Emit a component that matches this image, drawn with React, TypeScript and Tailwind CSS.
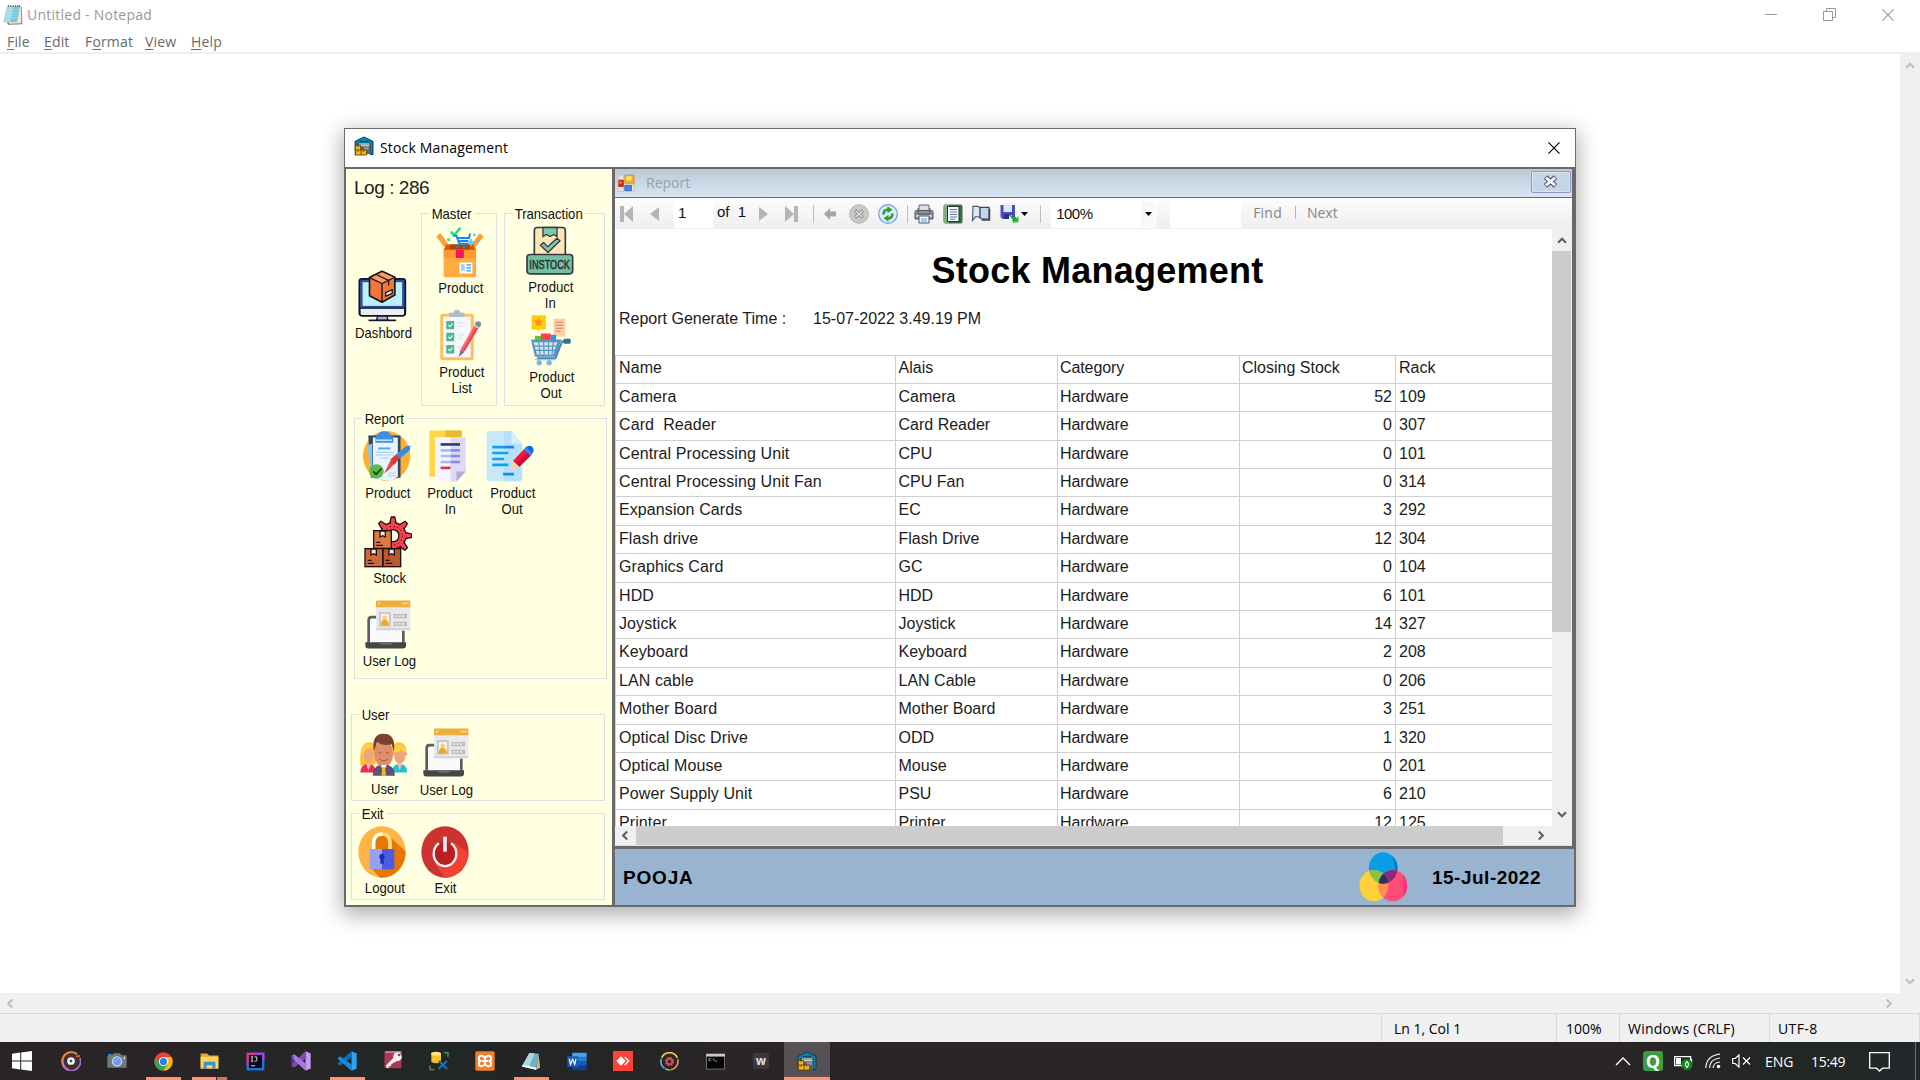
import { ReactNode } from "react";

type IconProps = { className?: string };

/* ---------- window and application icons ---------- */

const Warehouse = ({ className }: IconProps) => (
  <svg viewBox="0 0 58 60" className={className}>
    <path d="M2 16 L29 3 L56 16 V56 H48 V22 H10 V56 H3 Z" fill="#0f87ab" stroke="#0b3b4d" strokeWidth="3" />
    <path d="M16 16 h26" stroke="#0b3b4d" strokeWidth="3" />
    <rect x="11" y="22" width="37" height="32" fill="#5c6672" />
    <path d="M14 24 h31 M14 29 h31" stroke="#e1e5ea" strokeWidth="3" />
    <rect x="29" y="33" width="14" height="10" fill="#8a929b" />
    <path d="M3 28 h16 v14 h18 v15 h-34 z" fill="#f5b51b" stroke="#5a3c05" strokeWidth="2.5" />
    <path d="M3 42 h17 v15 M11 28 v6 M11 42 v6 M28 42 v6" stroke="#5a3c05" strokeWidth="2.5" fill="none" />
  </svg>
);

const NotepadSmall = ({ className }: IconProps) => (
  <svg viewBox="8 12 60 60" className={className}>
    <path d="M64 16 L66 70 L24 71 L20 66 Z" fill="#8d7755" />
    <path d="M22 17 L62 15 L63 67 L26 68 Z" fill="#f1ead8" />
    <path d="M20 17 L60 15 L50 64 L9 64 Z" fill="#7cc3d6" />
    <path d="M20 17 L40 16 L30 64 L9 64 Z" fill="#a5dbe6" />
    <path d="M20 26h36M18 34h36M16 42h36M14 50h36" stroke="#b8e3ec" strokeWidth="2" />
    <path d="M24 12v6M31 12v6M38 12v6M45 12v6M52 12v6M58 12v6" stroke="#57616a" strokeWidth="3" />
  </svg>
);

const WinForms = ({ className }: IconProps) => (
  <svg viewBox="22 40 53 53" className={className}>
    <rect x="25" y="43" width="48" height="48" fill="#e6e3df" stroke="#b9bcc4" strokeWidth="2" />
    <path d="M41 43v48M25 75h48" stroke="#b9bcc4" strokeWidth="2" />
    <rect x="26" y="57" width="16" height="21" fill="#c22c12" />
    <rect x="29" y="62" width="7" height="7" fill="#f0795c" />
    <rect x="45" y="43" width="27" height="26" rx="2" fill="#f2b21b" stroke="#c68a10" strokeWidth="2" />
    <rect x="49" y="47" width="16" height="12" fill="#fbe08a" />
    <rect x="45" y="74" width="20" height="15" fill="#4484e8" stroke="#2a5cbc" strokeWidth="2" />
  </svg>
);

const CloseX = ({ className }: IconProps) => (
  <svg viewBox="0 0 12 12" className={className}>
    <path d="M.4.4 11.6 11.6M11.6.4.4 11.6" stroke="currentColor" strokeWidth="1.1" fill="none" />
  </svg>
);

const Chevron = ({ className }: IconProps) => (
  <svg viewBox="0 0 10 7" className={className}>
    <path d="M1 5.7 5 1.7 9 5.7" stroke="currentColor" strokeWidth="2.2" fill="none" />
  </svg>
);

/* ---------- sidebar icons ---------- */

const DashboardIcon = () => (
  <svg viewBox="51 451 147 158" className="relative right-0.5 h-[52px] w-[49px]">
    <rect x="54" y="478" width="140" height="112" rx="8" fill="#33509a" stroke="#0d1526" strokeWidth="5" />
    <rect x="64" y="488" width="120" height="72" fill="#b9f0fb" />
    <path d="M56 567h136v16q0 7-7 7H63q-7 0-7-7z" fill="#e9eef3" stroke="#0d1526" strokeWidth="4" />
    <path d="M110 591h28l4 13h-36z" fill="#aab7c4" stroke="#0d1526" strokeWidth="4" />
    <path d="M82 604h84" stroke="#0d1526" strokeWidth="5" />
    <path d="M123 455 162 473V527L123 549 85 529V474Z" fill="#f0763c" stroke="#16131a" strokeWidth="5" strokeLinejoin="round" />
    <path d="M123 455 162 473 123 492 85 474Z" fill="#ff9b5e" stroke="#16131a" strokeWidth="4" strokeLinejoin="round" />
    <path d="M123 492V549M104 464 143 483V498" stroke="#16131a" strokeWidth="4" fill="none" />
    <path d="M134 520 154 511V522L134 531Z" fill="#e8eef6" stroke="#16131a" strokeWidth="4" />
  </svg>
);

const ProductBoxIcon = () => (
  <svg viewBox="288 316 145 156" className="h-[52px] w-[48px]">
    <path d="M312 378 289 347 301 337 327 372Z" fill="#ffa033" />
    <path d="M408 378 432 347 420 337 394 372Z" fill="#ffa033" />
    <path d="M318 371h84l7 18H311z" fill="#e05a00" />
    <path d="M330 371h60v14h-60z" fill="#b84100" />
    <path d="M311 388h98v76q0 6-6 6H317q-6 0-6-6z" fill="#ffab40" />
    <path d="M311 388h98v24h-98z" fill="#ff9a2e" />
    <rect x="348" y="388" width="24" height="24" fill="#f5145f" />
    <rect x="359" y="426" width="39" height="33" fill="#fff" />
    <path d="M363 431h12v20h-12z" fill="#9ad5ff" />
    <path d="M380 433h14M380 442h14M380 451h14" stroke="#1ea0ff" strokeWidth="4" />
    <path d="M333 333 343 343 362 321" stroke="#22e07c" strokeWidth="8" fill="none" />
    <path d="M340 345h10l8 24h28M350 352h38l3-14M354 361h32" stroke="#1687f5" strokeWidth="6" fill="none" />
    <circle cx="352" cy="379" r="4" fill="#1687f5" />
    <circle cx="373" cy="379" r="4" fill="#1687f5" />
    <circle cx="326" cy="357" r="5" fill="#43e8a0" />
    <path d="M394 355v20M384 365h20" stroke="#5ecbff" strokeWidth="7" />
    <circle cx="404" cy="342" r="4" fill="#42c4ff" />
    <circle cx="416" cy="359" r="3" fill="#42c4ff" />
  </svg>
);

const ProductListIcon = () => (
  <svg viewBox="300 567 128 157" className="h-[52px] w-[43px]">
    <rect x="303" y="581" width="101" height="141" rx="7" fill="#fdbf57" />
    <rect x="312" y="590" width="83" height="123" fill="#f6f7fb" />
    <path d="M330 578h12q2-9 11-9t11 9h12v13h-46z" fill="#b0bccb" />
    <g fill="#4fb494">
      <rect x="321" y="603" width="24" height="25" rx="2" />
      <rect x="321" y="639" width="24" height="25" rx="2" />
      <rect x="321" y="676" width="24" height="25" rx="2" />
    </g>
    <path d="M327 615l5 5 8-9M327 651l5 5 8-9M327 688l5 5 8-9" stroke="#e9fff7" strokeWidth="3.5" fill="none" />
    <path d="M355 609h20M355 618h12M355 645h20M355 654h12M355 682h10" stroke="#d5dff2" strokeWidth="3" />
    <path d="M408 612 420 621 377 694 361 706 365 687Z" fill="#ff6670" />
    <path d="M414 616 420 621 377 694 371 691Z" fill="#e04a5a" />
    <path d="M365 690 376 697 358 712Z" fill="#68788a" />
    <circle cx="417" cy="613" r="9" fill="#7d8ca0" />
    <path d="M405 615 417 624" stroke="#cdd8e4" strokeWidth="5" />
  </svg>
);

const InStockIcon = () => (
  <svg viewBox="558 317 144 146" className="h-[49px] w-[48px]">
    <rect x="583" y="321" width="93" height="88" rx="9" fill="#ffe6b8" stroke="#363a3c" strokeWidth="5" />
    <path d="M609 321h42v27l-10-6-11 6-11-6-10 6z" fill="#7fc8ac" stroke="#363a3c" strokeWidth="4" />
    <path d="M601 374l10-8 12 13 28-26 9 8-36 35z" fill="#7fc8ac" stroke="#363a3c" strokeWidth="4" strokeLinejoin="round" />
    <rect x="561" y="402" width="137" height="58" rx="9" fill="#74bfa4" stroke="#363a3c" strokeWidth="5" />
    <text x="629" y="445" textAnchor="middle" textLength="122" lengthAdjust="spacingAndGlyphs" fontFamily="Liberation Sans" fontSize="39" fill="#26302f" stroke="#26302f" strokeWidth="1.500">INSTOCK</text>
  </svg>
);

const CartIcon = () => (
  <svg viewBox="571 582 124 157" className="h-[52px] w-[41px]">
    <path d="M576 586h43v43h-18l-5 6-5-6h-15z" fill="#ffcf0f" />
    <path d="M597 591l4.500 9.500 10 1-7.500 7 2 10.500-9-5-9 5 2-10.500-7.500-7 10-1z" fill="#f79310" />
    <rect x="642" y="596" width="36" height="54" fill="#ffcfa6" />
    <path d="M648 607h23M648 616h23M648 625h23M648 634h16" stroke="#c98863" strokeWidth="3" />
    <rect x="586" y="648" width="20" height="14" fill="#5ec82c" />
    <rect x="604" y="641" width="30" height="20" fill="#ff3d4d" />
    <rect x="634" y="645" width="16" height="16" fill="#2497e8" />
    <path d="M574 659h92l-17 52h-63z" fill="#5a95bd" />
    <path d="M582 667h72l-13 38h-49z" fill="#cfe4f5" />
    <path d="M597 664l5 44M612 664l2 44M627 664v44M642 664l-5 44M580 679h74M584 692h66" stroke="#5a95bd" strokeWidth="3.500" />
    <path d="M592 716h56l20-51h24" stroke="#4987b0" strokeWidth="6" fill="none" />
    <rect x="672" y="657" width="22" height="15" rx="4" fill="#356f96" />
    <circle cx="599" cy="729" r="8" fill="#7fb5da" />
    <circle cx="629" cy="729" r="8" fill="#7fb5da" />
    <path d="M586 720h60" stroke="#9cc8e6" strokeWidth="4" />
  </svg>
);

const ReportProductIcon = () => (
  <svg viewBox="66 76 146 156" className="h-[52px] w-[48px]">
    <ellipse cx="138" cy="154" rx="72" ry="76" fill="#ffb02e" />
    <path d="M82 92h98v128H90z" fill="#2b4a66" />
    <path d="M96 98h76v118l-20 14-56-6z" fill="#e8f3ff" />
    <path d="M80 122l14-6v90l-6 6z" fill="#7ec5f8" />
    <path d="M108 94q4-15 22-15t22 15h6v20h-54V94z" fill="#3c8fe0" />
    <path d="M106 106h48" stroke="#bfe0fb" strokeWidth="5" />
    <path d="M112 131h37" stroke="#5ba7ee" strokeWidth="6" />
    <path d="M105 143h55M105 151h55M118 160h26M144 206h20M142 214h24" stroke="#a9cdf2" strokeWidth="3" />
    <path d="M130 207 152 163 165 173 145 196Z" fill="#e8483f" />
    <path d="M150 164 168 148 178 160 160 182Z" fill="#d93a34" />
    <path d="M168 148 196 124 210 122 209 136 178 162Z" fill="#3d8be0" />
    <circle cx="107" cy="201" r="22" fill="#5cb947" />
    <path d="M97 201l9 9 16-18" stroke="#173c1b" strokeWidth="5" fill="none" />
  </svg>
);

const ReportInIcon = () => (
  <svg viewBox="266 76 112 156" className="relative right-0.5 h-[52px] w-[37px]">
    <path d="M267 77h98v22h-80v118h-18z" fill="#ffd84a" />
    <path d="M316 77h49v20h-49z" fill="#eab92c" />
    <path d="M285 97h92v104l-28 30h-64z" fill="#f8f5ff" />
    <path d="M331 97h46v104l-28 30h-18z" fill="#dfd9f3" />
    <path d="M349 231v-30h28z" fill="#b5acd6" />
    <path d="M301 119h59" stroke="#23407c" strokeWidth="8" />
    <path d="M301 137h30M301 154h30M301 172h30" stroke="#a3bdff" strokeWidth="8" />
    <path d="M331 137h29M331 154h29M331 172h29" stroke="#7e8cf8" strokeWidth="8" />
    <path d="M301 190h30" stroke="#d23a42" strokeWidth="8" />
  </svg>
);

const ReportOutIcon = () => (
  <svg viewBox="437 76 146 156" className="relative right-px h-[52px] w-[48px]">
    <path d="M450 78h64l33 38v104q0 11-11 11h-86q-11 0-11-11V89q0-11 11-11z" fill="#c9e8fa" />
    <path d="M491 78h23l33 38v104q0 11-11 11h-45z" fill="#b8e0f6" />
    <path d="M514 78l33 38h-27q-6 0-6-6z" fill="#d9f0fc" />
    <path d="M456 127h36M456 145h49M456 163h36M456 181h49" stroke="#0ba6ea" strokeWidth="8" />
    <path d="M492 127h30M489 209h33" stroke="#1888f7" strokeWidth="8" />
    <path d="M553 133 573 153 538 187 519 169Z" fill="#fb1236" />
    <path d="M563 143 573 153 538 187 529 178Z" fill="#cf0c40" />
    <path d="M519 169 538 187 515 194Z" fill="#ffd59a" />
    <circle cx="569" cy="136" r="13" fill="#1466dc" />
    <path d="M553 133 573 153 579 148 558 126Z" fill="#2b8dfb" />
  </svg>
);

const StockIcon = () => {
  const teeth = [0, 45, 90, 135, 180, 225, 270, 315];
  return (
    <svg viewBox="70 332 144 156" className="h-[52px] w-[48px]">
      <g fill="#f9414d" stroke="#1d1015" strokeWidth="4">
        {teeth.map((a) => (
          <path key={a} d="M147 356 152 335h10l5 21z" transform={`rotate(${a} 157 391)`} />
        ))}
        <circle cx="157" cy="391" r="39" />
      </g>
      <circle cx="157" cy="391" r="36" fill="#f9414d" />
      {teeth.map((a) => (
        <path key={a} d="M150 358 154 338h6l4 20z" fill="#f9414d" transform={`rotate(${a} 157 391)`} />
      ))}
      <circle cx="157" cy="391" r="28" fill="none" stroke="#5b1520" strokeWidth="3" strokeDasharray="5 7" />
      <circle cx="157" cy="391" r="18" fill="#ffffe1" stroke="#1d1015" strokeWidth="4" />
      <g stroke="#1d1015" strokeWidth="4">
        <rect x="99" y="376" width="53" height="53" fill="#dd7a41" />
        <rect x="73" y="430" width="53" height="54" fill="#cf6a38" />
        <rect x="127" y="430" width="53" height="54" fill="#b85a2e" />
        <g fill="#ffe9d6">
          <path d="M118 377h16v18l-8-4-8 4z" />
          <path d="M91 431h16v18l-8-4-8 4z" />
          <path d="M145 431h16v18l-8-4-8 4z" />
        </g>
        <path d="M107 411h12M107 420h20M81 465h12M81 474h20M135 465h12M135 474h20" strokeWidth="4" />
      </g>
    </svg>
  );
};

const UserLogIcon = () => (
  <svg viewBox="74 584 138 146" className="h-[49px] w-[46px]">
    <path d="M85 712v-68q0-9 9-9h86q9 0 9 9v68" fill="#fafafa" stroke="#5d5d60" strokeWidth="8" />
    <path d="M75 710h122v10q0 9-9 9H84q-9 0-9-9z" fill="#454547" />
    <path d="M116 710h42l-6 8h-30z" fill="#6b6b6e" />
    <rect x="107" y="586" width="103" height="90" rx="4" fill="#e9e9ea" />
    <path d="M107 672h103v-3H107z" fill="#c4c4c6" />
    <path d="M107 605v-16q0-4 4-4h95q4 0 4 4v16z" fill="#efae3c" />
    <path d="M113 594h5M187 594h4M194 594h4M201 594h4" stroke="#fff0c4" strokeWidth="4" />
    <rect x="116" y="620" width="35" height="43" fill="#c3c4c8" />
    <rect x="121" y="625" width="25" height="33" fill="#f4f4f4" />
    <circle cx="133" cy="637" r="7" fill="#f9cf69" />
    <path d="M121 660q0-17 12-17t13 17z" fill="#eba92d" />
    <path d="M160 632h40M160 655h40" stroke="#bcbcc0" strokeWidth="13" />
    <path d="M165 632h30M165 655h30" stroke="#f0f0f0" strokeWidth="5" strokeDasharray="6 4" />
  </svg>
);

const UsersIcon = () => (
  <svg viewBox="59 120 146 134" className="h-[45px] w-[48px]">
    <path d="M61 222q-7-72 26-72 28 0 26 50l-10 18z" fill="#ffc22e" />
    <ellipse cx="85" cy="190" rx="15" ry="23" fill="#eda57c" />
    <path d="M69 182q8-16 30-18v-8H74q-10 10-10 26z" fill="#ffcf45" />
    <path d="M60 242q1-26 24-26t24 26z" fill="#f0265e" />
    <path d="M77 214h16l-8 22z" fill="#f2bfa4" />
    <path d="M157 190q-4-40 22-40 24 2 21 38z" fill="#ffc22e" />
    <ellipse cx="180" cy="192" rx="17" ry="23" fill="#eda57c" />
    <path d="M161 180q18 4 22-10 8 10 16 12-2-24-20-24-16 2-18 22z" fill="#ffcf45" />
    <circle cx="199" cy="186" r="4" fill="#eda57c" />
    <path d="M156 242q1-26 24-26t22 26z" fill="#24bfd4" />
    <path d="M172 214h15l-7 22z" fill="#f2bfa4" />
    <ellipse cx="131" cy="184" rx="29" ry="42" fill="#dd9069" />
    <path d="M101 178q-8-54 30-54 38 0 31 54l-7-22q-26 6-44-6z" fill="#7c4030" />
    <path d="M98 252q0-28 22-33l11 8 12-8q22 5 22 33z" fill="#5c5470" />
    <path d="M122 219h18l-9 24z" fill="#f4f0f6" />
    <path d="M127 226h8l3 26h-14z" fill="#f0b52a" />
    <path d="M117 200q14 12 28 0M116 182h10M137 182h10" stroke="#a55a3e" strokeWidth="3" fill="none" />
  </svg>
);

const LogoutIcon = () => (
  <svg viewBox="56 407 144 156" className="relative right-px h-[52px] w-[48px]">
    <defs>
      <clipPath id="lockDisc">
        <ellipse cx="128" cy="485" rx="71" ry="77" />
      </clipPath>
    </defs>
    <ellipse cx="128" cy="485" rx="71" ry="77" fill="#ffb545" />
    <path d="M150 438 204 488V570H130L94 532Z" fill="#e87700" clipPath="url(#lockDisc)" />
    <path d="M105 478v-22q2-24 23-24v-2q23 2 23 26v22" fill="#e87700" />
    <path d="M103 478v-22q2-24 25-25" stroke="#fff" strokeWidth="11" fill="none" />
    <path d="M128 431q23 1 24 25v22" stroke="#ffdf85" strokeWidth="11" fill="none" />
    <path d="M91 476h37v61H99q-8 0-8-8z" fill="#97a0f2" />
    <path d="M128 476h37v53q0 8-8 8h-29z" fill="#4c5ce0" />
    <path d="M128 490a9 9 0 0 1 5 16v14h-10v-14a9 9 0 0 1 5-16z" fill="#1e2bc0" />
  </svg>
);

const PowerIcon = () => (
  <svg viewBox="243 407 144 156" className="h-[52px] w-[48px]">
    <defs>
      <clipPath id="powerDisc">
        <ellipse cx="315" cy="485" rx="71" ry="77" />
      </clipPath>
    </defs>
    <ellipse cx="315" cy="485" rx="71" ry="77" fill="#cc3330" />
    <path d="M345 458 400 500V570H320L284 518Z" fill="#f34235" clipPath="url(#powerDisc)" />
    <ellipse cx="315" cy="490" rx="33" ry="36" fill="#b71f22" />
    <path d="M297 459a34 37 0 1 0 36 0" stroke="#f3f3f3" strokeWidth="7" fill="none" />
    <path d="M315 439v45" stroke="#ececec" strokeWidth="11" />
  </svg>
);

const ColorCircles = () => (
  <svg viewBox="835 214 146 150" className="h-[50px] w-[49px]">
    <defs>
      <clipPath id="cyanDisc">
        <ellipse cx="907" cy="262" rx="43" ry="47" />
      </clipPath>
      <clipPath id="yellowDisc">
        <ellipse cx="879" cy="315" rx="43" ry="47" />
      </clipPath>
    </defs>
    <ellipse cx="907" cy="262" rx="43" ry="47" fill="#089fe6" />
    <path d="M934 225q16 14 16 37t-9 35q6-35-7-72z" fill="#0675d0" />
    <ellipse cx="879" cy="315" rx="43" ry="47" fill="#ffd23c" />
    <ellipse cx="936" cy="315" rx="43" ry="47" fill="#ff4f79" />
    <path d="M965 281q14 14 14 34t-14 34q6-34 0-68z" fill="#ff2f86" />
    <ellipse cx="936" cy="315" rx="43" ry="47" fill="#ff9055" clipPath="url(#yellowDisc)" />
    <ellipse cx="879" cy="315" rx="43" ry="47" fill="#8ac441" clipPath="url(#cyanDisc)" />
    <ellipse cx="936" cy="315" rx="43" ry="47" fill="#8e2a7c" clipPath="url(#cyanDisc)" />
    <g clipPath="url(#yellowDisc)">
      <ellipse cx="936" cy="315" rx="43" ry="47" fill="#2b3158" clipPath="url(#cyanDisc)" />
    </g>
  </svg>
);

/* ---------- sidebar pieces ---------- */

function Tile({
  icon,
  lines,
  className = "",
  labels = "mt-1",
}: {
  icon: ReactNode;
  lines: string[];
  className?: string;
  labels?: string;
}) {
  return (
    <div className={`flex w-[62px] shrink-0 flex-col items-center ${className}`}>
      {icon}
      <div className={`flex flex-col items-center ${labels}`}>
        {lines.map((l) => (
          <span key={l} className="block scale-x-[.875] whitespace-nowrap text-[15px] leading-4 text-[#111]">
            {l}
          </span>
        ))}
      </div>
    </div>
  );
}

function Group({ title, className, children }: { title: string; className: string; children: ReactNode }) {
  return (
    <div className={`relative shrink-0 border-[1.5px] border-[#dedede] ${className}`}>
      <span className="absolute -top-[9px] left-[7px] origin-left scale-x-[.875] whitespace-nowrap bg-[#ffffe1] px-[3px] text-[15px] leading-[17px] text-[#111]">
        {title}
      </span>
      {children}
    </div>
  );
}

function Sidebar() {
  return (
    <div className="flex w-[266px] shrink-0 flex-col bg-[#ffffe1]">
      <div className="pl-[8px] pt-[8px] text-[19px] leading-[22px] tracking-[-0.45px] text-[#222]">Log : 286</div>
      <div className="mt-[14px] flex">
        <div className="w-[75px] pl-[5px] pt-[57px]">
          <div className="flex w-[66px] justify-center">
            <Tile icon={<DashboardIcon />} lines={["Dashbord"]} labels="mt-[3px]" />
          </div>
        </div>
        <Group title="Master" className="flex h-[193px] w-[76px] flex-col pl-[7px] pt-[12px]">
          <Tile icon={<ProductBoxIcon />} lines={["Product"]} labels="mt-[2px] pl-px" />
          <Tile icon={<ProductListIcon />} lines={["Product", "List"]} className="mt-[13px]" labels="mt-[3px] pl-[3px]" />
        </Group>
        <Group title="Transaction" className="ml-[7px] flex h-[193px] w-[101px] flex-col pl-[14px] pt-[12px]">
          <Tile icon={<InStockIcon />} lines={["Product", "In"]} labels="mt-1 pl-px" />
          <Tile icon={<CartIcon />} lines={["Product", "Out"]} className="mt-[3px]" labels="mt-[3px] pl-[3px]" />
        </Group>
      </div>
      <Group title="Report" className="ml-[8px] mt-[12px] flex h-[261px] w-[253px] flex-col pt-[11px]">
        <div className="flex">
          <Tile icon={<ReportProductIcon />} lines={["Product"]} className="ml-[1px]" labels="mt-[3px] pl-[2px]" />
          <Tile icon={<ReportInIcon />} lines={["Product", "In"]} labels="mt-[3px] pl-[2px]" />
          <Tile icon={<ReportOutIcon />} lines={["Product", "Out"]} labels="mt-[3px] pl-[3px]" />
        </div>
        <Tile icon={<StockIcon />} lines={["Stock"]} className="ml-[2px] mt-[-1px]" labels="mt-[2px] pl-[3px]" />
        <Tile icon={<UserLogIcon />} lines={["User Log"]} className="ml-[2px] mt-[14px]" labels="mt-1 pl-[2px]" />
      </Group>
      <Group title="User" className="ml-[5px] mt-[35px] flex h-[87px] w-[254px] pl-px pt-[16px]">
        <Tile icon={<UsersIcon />} lines={["User"]} className="pt-px" labels="mt-1 pl-px" />
        <Tile icon={<UserLogIcon />} lines={["User Log"]} className="mt-[-3px]" labels="mt-[5px] pl-px" />
      </Group>
      <Group title="Exit" className="ml-[5px] mt-[12px] flex h-[87px] w-[254px] pt-[12px]">
        <Tile icon={<LogoutIcon />} lines={["Logout"]} labels="mt-[2px] pl-[4px]" />
        <Tile icon={<PowerIcon />} lines={["Exit"]} labels="mt-[2px] pl-px" />
      </Group>
    </div>
  );
}

/* ---------- report viewer ---------- */

const rows: [string, string, number, number][] = [
  ["Camera", "Camera", 52, 109],
  ["Card  Reader", "Card Reader", 0, 307],
  ["Central Processing Unit", "CPU", 0, 101],
  ["Central Processing Unit Fan", "CPU Fan", 0, 314],
  ["Expansion Cards", "EC", 3, 292],
  ["Flash drive", "Flash Drive", 12, 304],
  ["Graphics Card", "GC", 0, 104],
  ["HDD", "HDD", 6, 101],
  ["Joystick", "Joystick", 14, 327],
  ["Keyboard", "Keyboard", 2, 208],
  ["LAN cable", "LAN Cable", 0, 206],
  ["Mother Board", "Mother Board", 3, 251],
  ["Optical Disc Drive", "ODD", 1, 320],
  ["Optical Mouse", "Mouse", 0, 201],
  ["Power Supply Unit", "PSU", 6, 210],
  ["Printer", "Printer", 12, 125],
];

const cellPad = [
  "pl-[3px] tracking-[0.1px]",
  "pl-[2.500px]",
  "pl-[2px] tracking-[-0.1px]",
  "pl-[2px] pr-[3px]",
  "pl-[3px]",
];

function Row({ cells, header = false }: { cells: (string | number)[]; header?: boolean }) {
  return (
    <div
      className={`grid h-[28.4px] shrink-0 grid-cols-[280px_162px_182px_156px_1fr] border-b border-[#cfcfcf] ${
        header ? "leading-[24px]" : "leading-[25px]"
      }`}
    >
      {cells.map((c, i) => (
        <div
          key={i}
          className={`whitespace-pre border-l border-[#cfcfcf] ${cellPad[i]} ${i === 3 && !header ? "text-right" : ""}`}
        >
          {c}
        </div>
      ))}
    </div>
  );
}

const Sep = ({ className = "" }: IconProps) => <div className={`h-[18px] w-px shrink-0 bg-[#bdbdbd] ${className}`} />;

function Toolbar() {
  return (
    <div className="flex h-[31px] shrink-0 items-center bg-gradient-to-b from-[#fdfdfd] to-[#eeeeee] text-[15px] text-[#111]">
      <svg viewBox="0 0 13 16" className="ml-[5px] h-4 w-[13px]"><path d="M0 0h4v16H0zM13 0v16L4 8z" fill="#b5b5b5" /></svg>
      <svg viewBox="0 0 9 14" className="ml-[17px] h-3.5 w-[9px]"><path d="M9 0v14L0 7z" fill="#b5b5b5" /></svg>
      <div className="ml-[15px] h-[28px] w-[39px] bg-white pl-[4px] leading-[25px]">1</div>
      <span className="ml-[4px] whitespace-pre pb-0.5">of  1</span>
      <svg viewBox="0 0 9 14" className="ml-[13px] h-3.5 w-[9px]"><path d="M0 0v14L9 7z" fill="#b5b5b5" /></svg>
      <svg viewBox="0 0 13 16" className="ml-[17px] h-4 w-[13px]"><path d="M9 0h4v16H9zM0 0v16L9 8z" fill="#b5b5b5" /></svg>
      <Sep className="ml-[15px]" />
      <svg viewBox="0 0 12 12" className="ml-[10px] h-3 w-3"><path d="M0 6 6 0v3.500h6v5H6V12z" fill="#a5a5a5" /></svg>
      <svg viewBox="0 0 20 20" className="ml-[13px] h-5 w-5">
        <circle cx="10" cy="10" r="9.300" fill="#c9c9c9" stroke="#b0b0b0" />
        <path d="M6 6.500l8 7M14 6.500l-8 7" stroke="#8f8f8f" strokeWidth="3.200" />
        <path d="M6.500 7l7 6M13.500 7l-7 6" stroke="#e4e4e4" strokeWidth="1.300" />
      </svg>
      <svg viewBox="0 0 20 20" className="ml-[9px] h-5 w-5">
        <circle cx="10" cy="10" r="9.300" fill="#dcebfb" stroke="#6f9ad6" strokeWidth="1.200" />
        <path d="M5.500 10.500q0-5 5-5" stroke="#2f9e2b" strokeWidth="2.600" fill="none" />
        <path d="M9.500 2.200l5 3.600-5 3.400z" fill="#2f9e2b" />
        <path d="M14.500 9.500q0 5-5 5" stroke="#2f9e2b" strokeWidth="2.600" fill="none" />
        <path d="M10.500 17.800l-5-3.600 5-3.400z" fill="#2f9e2b" />
      </svg>
      <Sep className="ml-[9px]" />
      <svg viewBox="0 0 20 20" className="ml-[6px] h-5 w-5">
        <path d="M5 1h10v7H5z" fill="#d8dfe8" stroke="#5c6670" />
        <path d="M1 8q0-1.500 1.500-1.500h15Q19 6.500 19 8v7H1z" fill="#8d949c" stroke="#4d545b" />
        <path d="M4 4v6h12V4" stroke="#4d545b" fill="none" />
        <path d="M2 12h16" stroke="#dfe3e8" strokeWidth="1.500" />
        <path d="M5 12h10v7H5z" fill="#f8fbff" stroke="#4d545b" />
        <path d="M7 15h6M7 17h6" stroke="#49a6e8" strokeWidth="1.200" />
      </svg>
      <svg viewBox="0 0 20 20" className="ml-[9px] h-5 w-5">
        <rect x=".5" y=".5" width="19" height="19" rx="2" fill="#3c6e45" />
        <path d="M1 1h5v18H1z" fill="#7fae82" />
        <rect x="4.500" y="2.500" width="11.500" height="15" fill="#f4faff" stroke="#1f3d27" />
        <path d="M7 5.500h7M7 8h7M7 10.500h7M7 13h7M7 15.200h5" stroke="#5f7b96" strokeWidth="1" />
      </svg>
      <svg viewBox="0 0 20 18" className="ml-[8px] h-[17px] w-5">
        <path d="M1.500 1.500h5.500l2 2v10l-2-1H4l-3 4z" fill="#dfe8f5" stroke="#4b5a6e" strokeWidth="1.200" />
        <path d="M9 2.500h9.500V15H11l-2-1.500z" fill="#c3d4ee" stroke="#3d4552" strokeWidth="1.200" />
        <path d="M11 16h8V4" stroke="#3d4552" strokeWidth="1.600" fill="none" />
      </svg>
      <svg viewBox="0 0 19 19" className="ml-[9px] h-[19px] w-[19px]">
        <path d="M.5 1h14.500v14H2.500L.5 13z" fill="#4850b8" />
        <path d="M3.500 1h8.500v7H3.500z" fill="#dfe6fb" />
        <path d="M4 10h8v5H4z" fill="#2a2f85" />
        <path d="M9 11h3v4H9z" fill="#e8ebff" />
        <path d="M9 9.500l4 4 2-1.500 3.500 6-7-1 1.500-1.500-4-4z" fill="#1fa52a" />
        <path d="M12 19l6.500-1V12z" fill="#28b833" />
      </svg>
      <svg viewBox="0 0 7 4" className="ml-[2px] h-1 w-[7px]"><path d="M0 0h7L3.500 4z" fill="#000" /></svg>
      <Sep className="ml-[12px]" />
      <div className="ml-[10px] flex h-[28px] w-[105px] items-center bg-white pl-[5px] pr-px">
        <span className="flex-1 pt-px tracking-[-0.5px]">100%</span>
        <span className="flex h-[26px] w-[14px] items-center justify-center bg-[#f8f8f8]">
          <svg viewBox="0 0 7 4" className="h-1 w-[7px]"><path d="M0 0h7L3.500 4z" fill="#000" /></svg>
        </span>
      </div>
      <div className="ml-[14px] h-[28px] w-[71px] bg-white" />
      <div className="flex items-center pb-0.5 font-['Open_Sans',sans-serif] text-[14px] text-[#858585]">
        <span className="ml-[12px] tracking-[0.2px]">Find</span>
        <div className="ml-[13px] h-[13px] w-px bg-[#b5b5b5]" />
        <span className="ml-[11px]">Next</span>
      </div>
    </div>
  );
}

function ReportViewer() {
  return (
    <div className="flex min-w-0 flex-1 flex-col border-r-2 border-[#696969] bg-[#f0f0f0]">
      <div className="flex h-[29px] shrink-0 items-center border-b border-[#696969] bg-gradient-to-b from-[#bccad8] to-[#d8e5f3] pl-[2px] pr-[1px]">
        <WinForms className="h-[18px] w-[18px]" />
        <span className="ml-[11px] flex-1 pb-px font-['Open_Sans',sans-serif] text-[14px] text-[#98a0aa]">Report</span>
        <div className="mb-[3px] flex h-[22px] w-[40px] items-center justify-center rounded-[2px] border border-[#8b9cc0] bg-[#c6d5e6] shadow-[inset_0_0_0_1px_#d9e4f2]">
          <svg viewBox="0 0 15 13" className="mr-px h-[13px] w-[15px]">
            <path d="M2.500 2.200l10 8.600M12.500 2.200l-10 8.600" stroke="#555d70" strokeWidth="5" />
            <path d="M3 2.700l9 7.600M12 2.700l-9 7.600" stroke="#fff" strokeWidth="2.600" />
          </svg>
        </div>
      </div>
      <Toolbar />
      <div className="flex h-[597px] shrink-0">
        <div className="flex w-[937px] flex-col overflow-hidden bg-white text-[16px] text-[#1c1c1c]">
          <h1 className="ml-[28px] mt-[22px] shrink-0 text-center text-[36px] font-bold leading-[40px] tracking-[0.25px] text-black">
            Stock Management
          </h1>
          <div className="mt-[18px] flex shrink-0 pl-[4px] leading-5">
            <span className="w-[194px]">Report Generate Time :</span>
            <span>15-07-2022 3.49.19 PM</span>
          </div>
          <div className="mt-[25.5px] flex shrink-0 flex-col border-t border-[#cfcfcf]">
            <Row header cells={["Name", "Alais", "Category", "Closing Stock", "Rack"]} />
            {rows.map(([n, a, s, r]) => (
              <Row key={n} cells={[n, a, "Hardware", s, r]} />
            ))}
          </div>
        </div>
        <div className="flex w-[19px] flex-col items-center bg-[#f0f0f0] text-[#606060]">
          <div className="flex h-[22px] items-center"><Chevron className="h-[7px] w-[10px]" /></div>
          <div className="h-[381px] w-full bg-[#cdcdcd]" />
          <div className="flex-1" />
          <div className="flex h-[24px] items-center"><Chevron className="h-[7px] w-[10px] rotate-180" /></div>
        </div>
      </div>
      <div className="flex h-[19px] shrink-0 items-center text-[#606060]">
        <div className="flex w-[21px] justify-center pr-[2px]"><Chevron className="h-[7px] w-[10px] -rotate-90" /></div>
        <div className="h-full w-[867px] bg-[#cdcdcd]" />
        <div className="ml-[33px]"><Chevron className="h-[7px] w-[10px] rotate-90" /></div>
      </div>
      <div className="h-[1px] bg-[#e3e3e3]" />
      <div className="flex-1 bg-[#696969]" />
    </div>
  );
}

function StockWindow() {
  return (
    <div className="absolute left-[344px] top-[128px] flex h-[779px] w-[1232px] flex-col border border-[#6b6b6b] bg-white font-['Liberation_Sans',Arial,sans-serif] shadow-[0_6px_20px_2px_rgba(0,0,0,0.32)]">
      <div className="flex h-[38px] shrink-0 items-center pl-[9px] pr-[15px]">
        <Warehouse className="h-5 w-5 -translate-y-0.5" />
        <span className="ml-[6px] flex-1 pb-[2px] font-['Open_Sans',sans-serif] text-[14px] tracking-[0.17px] text-black">Stock Management</span>
        <CloseX className="h-3 w-3 text-black" />
      </div>
      <div className="flex min-h-0 flex-1 border border-t-2 border-[#696969]">
        <Sidebar />
        <div className="flex min-w-0 flex-1 flex-col border-l-[3px] border-[#696969]">
          <div className="flex h-[680px] shrink-0">
            <ReportViewer />
          </div>
          <div className="flex flex-1 items-center bg-[#99b4d1] text-[19px] font-bold text-black">
            <span className="ml-[8px] flex-1 pt-[2px] tracking-[0.8px]">POOJA</span>
            <ColorCircles />
            <span className="ml-[24px] mr-[33px] pt-[2px] tracking-[0.5px]">15-Jul-2022</span>
          </div>
        </div>
      </div>
    </div>
  );
}

/* ---------- notepad ---------- */

function Notepad() {
  const menu: [string, string, string, string][] = [
    ["", "F", "ile", "w-[37px]"],
    ["", "E", "dit", "w-[41px]"],
    ["F", "o", "rmat", "w-[60px]"],
    ["", "V", "iew", "w-[46px]"],
    ["", "H", "elp", "w-[46px]"],
  ];
  return (
    <div className="flex h-[1042px] flex-col bg-white font-['Open_Sans','Noto_Sans',sans-serif]">
      <div className="flex h-[29px] shrink-0 items-center pl-[3px]">
        <NotepadSmall className="h-5 w-5" />
        <span className="ml-[4px] flex-1 text-[14px] tracking-[0.24px] text-[#999]">Untitled - Notepad</span>
        <div className="mr-[46px] h-px w-3 bg-[#999]" />
        <svg viewBox="0 0 13 13" className="mr-[46px] h-[13px] w-[13px]">
          <path d="M.5 3.500h9v9h-9zM3.500 3.500v-3h9v9h-3" stroke="#999" fill="none" />
        </svg>
        <CloseX className="mr-[26px] h-3 w-3 text-[#999]" />
      </div>
      <div className="flex h-[23px] shrink-0 pl-[7px] text-[14px] leading-[25px] tracking-[0.15px] text-[#6a6a6a]">
        {menu.map(([a, u, b, w]) => (
          <span key={u} className={w}>
            {a}
            <span className="underline underline-offset-2">{u}</span>
            {b}
          </span>
        ))}
      </div>
      <div className="h-[2px] shrink-0 bg-[#f0f0f0]" />
      <div className="flex flex-1">
        <div className="flex-1" />
        <div className="flex w-[20px] flex-col items-center justify-between bg-[#f0f0f0] py-[8px] text-[#bfbfbf]">
          <Chevron className="h-[7px] w-[10px]" />
          <Chevron className="h-[7px] w-[10px] rotate-180" />
        </div>
      </div>
      <div className="flex h-[20px] shrink-0 items-center justify-between bg-[#f0f0f0] pl-[5px] pr-[26px] text-[#bfbfbf]">
        <Chevron className="h-[7px] w-[10px] -rotate-90" />
        <Chevron className="h-[7px] w-[10px] rotate-90" />
      </div>
      <div className="flex h-[29px] shrink-0 justify-end border-t border-[#d9d9d9] bg-[#f0f0f0] text-[14px] leading-[29px] text-black">
        <div className="w-[175px] border-l border-[#d9d9d9] pl-[12px]">Ln 1, Col 1</div>
        <div className="w-[63px] border-l border-[#d9d9d9] pl-[9px]">100%</div>
        <div className="w-[150px] border-l border-[#d9d9d9] pl-[8px] tracking-[0.25px]">Windows (CRLF)</div>
        <div className="w-[151px] border-x border-[#d9d9d9] pl-[8px] tracking-[0.4px]">UTF-8</div>
      </div>
    </div>
  );
}

/* ---------- taskbar ---------- */

const taskIcons: { icon: ReactNode; mark?: string; active?: boolean }[] = [
  {
    icon: (
      <svg viewBox="182 62 62 62" className="h-5 w-5">
        <circle cx="213" cy="93" r="26" fill="#3a3233" />
        <path d="M232 72A28 28 0 1 0 205 120" stroke="#f28a4a" strokeWidth="6" fill="none" />
        <path d="M187 104A28 28 0 1 0 241 84" stroke="#a86bc9" strokeWidth="6" fill="none" />
        <path d="M187 88A28 28 0 0 0 192 110" stroke="#dd7a80" strokeWidth="6" fill="none" />
        <circle cx="213" cy="93" r="12" fill="#eeeeee" />
        <circle cx="213" cy="93" r="4" fill="#444" />
        <path d="M224 78l16-4v8z" fill="#ef6848" />
      </svg>
    ),
  },
  {
    icon: (
      <svg viewBox="320 64 62 56" className="h-[18px] w-5">
        <path d="M324 74h12l4-6h20l5 6h16v39h-60V78z" fill="#6f7a80" />
        <path d="M324 70h10v5h-10z" fill="#2b9ae8" />
        <circle cx="351" cy="93" r="16" fill="#dfe6f2" />
        <circle cx="351" cy="93" r="13" fill="#7f8df0" />
        <path d="M340 86a13 13 0 0 1 20-3l-18 18z" fill="#5fb4f2" />
        <path d="M374 80v6M371 83h6" stroke="#fff" strokeWidth="2" />
      </svg>
    ),
  },
  {
    mark: "on",
    icon: (
      <svg viewBox="460 64 58 58" className="h-[19px] w-[19px]">
        <circle cx="489" cy="93" r="28" fill="#ea4335" />
        <path d="M464.800 79A28 28 0 0 0 489 121L502 99 489 93 476 99z" fill="#34a853" />
        <path d="M513.200 79A28 28 0 0 1 489 121L502 100 496 79z" fill="#fbbc05" />
        <circle cx="489" cy="93" r="14" fill="#fff" />
        <circle cx="489" cy="93" r="11" fill="#2e7cf0" />
      </svg>
    ),
  },
  {
    mark: "multi",
    icon: (
      <svg viewBox="598 66 58 52" className="h-[18px] w-[19px]">
        <path d="M600 69h20l6 6h28v40h-54z" fill="#e8a33a" />
        <path d="M600 79h54v36h-54z" fill="#ffd65c" />
        <path d="M609 94h36v22h-9v-11h-18v11h-9z" fill="#3b8fd4" />
      </svg>
    ),
  },
  {
    icon: (
      <svg viewBox="736 64 58 58" className="h-[19px] w-[19px]">
        <path d="M738 66h54v54h-54z" fill="#1877f2" />
        <path d="M738 66h30l-30 40z" fill="#f0317e" />
        <path d="M760 66h32v24z" fill="#b43ee0" />
        <rect x="745" y="73" width="40" height="40" fill="#09061c" />
        <path d="M751 79h7M754.500 79v13M751 92h7M762 79h7v10q0 3-3 3h-4M751 106h13" stroke="#fff" strokeWidth="2.600" fill="none" />
      </svg>
    ),
  },
  {
    icon: (
      <svg viewBox="872 62 62 62" className="h-5 w-5">
        <path d="M917 63 933 70V116L917 123Z" fill="#c59bf0" />
        <path d="M917 63 874 103 874 109 882 113 920 84Z" fill="#7d4fb5" />
        <path d="M917 123 874 83 874 77 882 72 920 102Z" fill="#a578dc" />
        <path d="M874 77h6v32h-6z" fill="#6a3fa0" />
      </svg>
    ),
  },
  {
    mark: "on",
    icon: (
      <svg viewBox="1010 62 62 62" className="h-5 w-5">
        <path d="M1055 63 1071 70V116L1055 123Z" fill="#2ba5ee" />
        <path d="M1055 63 1011 101 1019 108 1056 82Z" fill="#0b6fbe" />
        <path d="M1055 123 1011 85 1019 78 1056 104Z" fill="#1a8ad6" />
      </svg>
    ),
  },
  {
    icon: (
      <svg viewBox="1148 62 56 54" className="h-[18px] w-[19px] -translate-y-px">
        <rect x="1149" y="63" width="51" height="51" rx="5" fill="#a83a56" />
        <path d="M1149 67h51v-4h-48z" fill="#d98ea0" />
        <circle cx="1188" cy="79" r="13" fill="#f4eef0" />
        <circle cx="1193" cy="74" r="4" fill="#8a3a4c" />
        <path d="M1178 80 1154 105V112H1163V107H1169V102L1186 92Z" fill="#f4eef0" />
      </svg>
    ),
  },
  {
    icon: (
      <svg viewBox="26 62 60 60" className="h-5 w-5">
        <path d="M33 69v26q14 8 29 0V69z" fill="#f4c02c" />
        <ellipse cx="47" cy="70" rx="15" ry="6" fill="#ffe37c" />
        <path d="M70 67h13v12M29 106v12h13" stroke="#45a847" strokeWidth="4" fill="none" />
        <path d="M56 92l24 24M80 92l-26 24" stroke="#2070b8" strokeWidth="6" />
        <path d="M52 94l10-4 2 10z" fill="#2070b8" />
      </svg>
    ),
  },
  {
    icon: (
      <svg viewBox="164 62 62 62" className="h-5 w-5">
        <rect x="165" y="63" width="60" height="60" rx="5" fill="#f0802b" />
        <path d="M195 86q-3-9-11-9-8 0-8 8 0 8 8 8-8 0-8 8t8 8q8 0 11-9 3 9 11 9t8-8q0-8-8-8 8 0 8-8t-8-8q-8 0-11 9zM186 93h18" stroke="#fff" strokeWidth="6" fill="none" />
      </svg>
    ),
  },
  {
    mark: "on",
    icon: (
      <svg viewBox="301 64 60 58" className="h-[19px] w-5">
        <path d="M354 68 359 112 346 118Z" fill="#c3b28c" />
        <path d="M326 67 355 69 346 118 303 108Z" fill="#6fb2c2" />
        <path d="M326 67 342 68 324 112 303 108Z" fill="#a9d9e2" />
        <path d="M303 108l43 10 2-6-42-9z" fill="#f2f6f6" />
      </svg>
    ),
  },
  {
    icon: (
      <svg viewBox="440 64 62 58" className="h-[19px] w-5">
        <path d="M456 66h45v14h-45z" fill="#41a5ee" />
        <path d="M456 80h45v13h-45z" fill="#2b7cd3" />
        <path d="M456 93h45v13h-45z" fill="#185abd" />
        <path d="M456 106h45v14h-45z" fill="#103f91" />
        <rect x="441" y="77" width="33" height="33" fill="#185abd" />
        <path d="M447 84l4 18 6.500-16 6.500 16 4-18" stroke="#fff" strokeWidth="3.600" fill="none" />
      </svg>
    ),
  },
  {
    icon: (
      <svg viewBox="579 63 60 60" className="h-5 w-5">
        <rect x="579" y="63" width="60" height="60" fill="#ff4237" />
        <path d="M603 79l14 14-14 14-14-14z" fill="#fff" />
        <path d="M612 82l11 11-11 11" stroke="#ff4237" strokeWidth="3" fill="none" />
        <path d="M614 81l12 12-12 12" stroke="#fff" strokeWidth="4" fill="none" />
      </svg>
    ),
  },
  {
    icon: (
      <svg viewBox="718 64 58 58" className="h-[19px] w-[19px]">
        <path d="M723 82A26 26 0 0 1 771 82" stroke="#f5c54f" strokeWidth="5" fill="none" />
        <path d="M772 86A26 26 0 0 1 752 118" stroke="#e2a04a" strokeWidth="5" fill="none" />
        <path d="M750 119A26 26 0 0 1 734 115" stroke="#7ec05a" strokeWidth="5" fill="none" />
        <path d="M732 114A26 26 0 0 1 722 85" stroke="#59b4e8" strokeWidth="5" fill="none" />
        <circle cx="747" cy="93" r="12" fill="none" stroke="#e83e50" strokeWidth="5" strokeDasharray="5.400 4" />
        <circle cx="747" cy="93" r="8.500" fill="none" stroke="#e83e50" strokeWidth="6" />
      </svg>
    ),
  },
  {
    icon: (
      <svg viewBox="854 67 58 50" className="h-[17px] w-[19px]">
        <rect x="856" y="69" width="55" height="46" fill="#050505" stroke="#9b9b9b" strokeWidth="2" />
        <path d="M855 69h57v8h-57z" fill="#c9c9c9" />
        <path d="M868 83h-5v7h5M872 84v1M872 89v1M876 82l4 9M882 91h6" stroke="#e0e0e0" strokeWidth="2" fill="none" />
      </svg>
    ),
  },
  {
    icon: (
      <div className="flex h-4 w-4 items-center justify-center rounded-[2px] bg-[#3a3a3c] text-[12px] font-bold leading-none text-[#e0e0e0]">w</div>
    ),
  },
  { active: true, mark: "full", icon: <Warehouse className="h-5 w-5" /> },
];

function Taskbar() {
  return (
    <div className="flex h-[38px] items-stretch bg-[linear-gradient(90deg,#2a2427_0%,#282526_12%,#222726_21%,#242525_29%,#2a2528_38%,#2a2528_84%,#222624_92%,#22282a_100%)] font-['Open_Sans','Noto_Sans',sans-serif] text-white">
      <div className="flex w-[48px] items-center pl-[12px]">
        <svg viewBox="0 0 20 20" className="h-5 w-5">
          <path d="M0 2.700 8.200 1.600V9.500H0zM9.200 1.400 20 0v9.500H9.200zM0 10.500h8.200v7.900L0 17.300zM9.200 10.500H20V20L9.200 18.600z" fill="#fff" />
        </svg>
      </div>
      {taskIcons.map(({ icon, mark, active }, i) => (
        <div key={i} className={`relative flex w-[46px] items-center justify-center ${active ? "bg-[#565154]" : ""}`}>
          {icon}
          {mark === "on" && <span className="absolute bottom-0 left-[6px] h-[3px] w-[35px] bg-[#ff9473]" />}
          {mark === "full" && <span className="absolute bottom-0 left-0 h-[3px] w-full bg-[#ff9473]" />}
          {mark === "multi" && (
            <span className="absolute bottom-0 left-[6px] flex h-[3px] w-[35px]">
              <span className="w-[24px] bg-[#ff9473]" />
              <span className="ml-px flex-1 bg-[#c97962]" />
            </span>
          )}
        </div>
      ))}
      <div className="ml-auto flex items-center text-[14px]">
        <svg viewBox="0 0 16 9" className="h-[9px] w-4"><path d="M1 8l7-7 7 7" stroke="#fff" strokeWidth="1.300" fill="none" /></svg>
        <div className="ml-[12px] flex h-5 w-5 items-center justify-center rounded-[3px] bg-[#3d9c3f] text-[18px] font-bold leading-none">Q</div>
        <svg viewBox="0 0 20 15" className="ml-[11px] mt-[3px] h-[15px] w-5">
          <path d="M.6 1.600h16v9H.6zM17.500 4v4.500" stroke="#fff" strokeWidth="1.300" fill="none" />
          <path d="M2 3h5v6.500H2z" fill="#fff" />
          <circle cx="13" cy="9.500" r="5.500" fill="#0e8a1e" />
          <path d="M13 6.500q3 3 0 6-3-3 0-6z" fill="none" stroke="#fff" strokeWidth="1.100" />
        </svg>
        <svg viewBox="0 0 16 16" className="ml-[11px] h-4 w-4">
          <path d="M.8 15Q1.500 2.500 15 1.200M4.500 15Q5 6 15 5M8 15Q8.500 9.500 15 9" stroke="#e8e8e8" strokeWidth="1.200" fill="none" />
          <circle cx="13.500" cy="13.500" r="1.800" fill="#fff" />
        </svg>
        <svg viewBox="0 0 19 14" className="ml-[11px] h-3.5 w-[19px]">
          <path d="M.7 4.500h2.500L7 1v12L3.200 9.500H.7z" stroke="#fff" strokeWidth="1.200" fill="none" />
          <path d="M11 3.500l7 7M18 3.500l-7 7" stroke="#fff" strokeWidth="1.200" />
        </svg>
        <span className="ml-[14px] w-[30px]">ENG</span>
        <span className="ml-[16px] w-[35px] tracking-[-0.3px]">15:49</span>
        <svg viewBox="0 0 21 20" className="ml-[23px] mt-0.5 h-5 w-[21px]">
          <path d="M.7.7h19.600v15.500h-6.800L10.500 19l-3-2.800H.7z" stroke="#fff" strokeWidth="1.300" fill="none" />
        </svg>
        <div className="ml-[25px] mr-[4px] h-[38px] w-px bg-[#6d6d6d]" />
      </div>
    </div>
  );
}

export default function App() {
  return (
    <div className="relative h-[1080px] w-[1920px] overflow-hidden bg-white">
      <Notepad />
      <Taskbar />
      <StockWindow />
    </div>
  );
}
